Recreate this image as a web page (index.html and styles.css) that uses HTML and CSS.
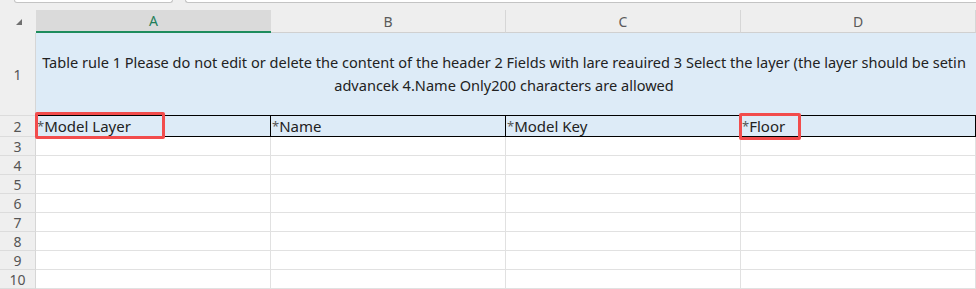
FILE: index.html
```html
<!DOCTYPE html>
<html lang="en">
<head>
    <meta charset="UTF-8">
    <meta name="viewport" content="width=device-width, initial-scale=1.0">
    <title>Model import template</title>
    <link rel="stylesheet" href="styles.css">
</head>
<body>
    <div class="tabbar">
        <span class="tab tab-first"></span>
        <span class="tab tab-rest"></span>
    </div>

    <div class="sheet">
        <div class="corner"><span class="select-all"></span></div>
        <div class="col-head is-active">A</div>
        <div class="col-head">B</div>
        <div class="col-head">C</div>
        <div class="col-head">D</div>

        <div class="row-head">1</div>
        <div class="cell rule">
            Table rule 1 Please do not edit or delete the content of the header 2 Fields with lare reauired 3 Select the layer (the layer should be setin<br>advancek 4.Name Only200 characters are allowed
        </div>

        <div class="row-head row-key">2</div>
        <div class="cell key"><span class="req">*</span>Model Layer<span class="mark mark-a"></span></div>
        <div class="cell key"><span class="req">*</span>Name</div>
        <div class="cell key"><span class="req">*</span>Model Key</div>
        <div class="cell key"><span class="req">*</span>Floor<span class="mark mark-d"></span></div>

        <div class="row-head">3</div>
        <div class="cell"></div><div class="cell"></div><div class="cell"></div><div class="cell"></div>
        <div class="row-head">4</div>
        <div class="cell"></div><div class="cell"></div><div class="cell"></div><div class="cell"></div>
        <div class="row-head">5</div>
        <div class="cell"></div><div class="cell"></div><div class="cell"></div><div class="cell"></div>
        <div class="row-head">6</div>
        <div class="cell"></div><div class="cell"></div><div class="cell"></div><div class="cell"></div>
        <div class="row-head">7</div>
        <div class="cell"></div><div class="cell"></div><div class="cell"></div><div class="cell"></div>
        <div class="row-head">8</div>
        <div class="cell"></div><div class="cell"></div><div class="cell"></div><div class="cell"></div>
        <div class="row-head">9</div>
        <div class="cell"></div><div class="cell"></div><div class="cell"></div><div class="cell"></div>
        <div class="row-head">10</div>
        <div class="cell"></div><div class="cell"></div><div class="cell"></div><div class="cell"></div>
    </div>
</body>
</html>
```

FILE: styles.css
```css
* {
    box-sizing: border-box;
}

body {
    margin: 0;
    background: #ffffff;
    font-family: "Noto Sans", sans-serif;
    overflow: hidden;
}

/* sheet tabs peeking in at the top */
.tabbar {
    height: 10px;
    background: #efefef;
    display: flex;
    align-items: flex-start;
}

.tab {
    height: 3px;
    background: #ffffff;
    border: 1px solid #c4c4c4;
    border-top: 0;
}

.tab-first {
    margin-left: 14px;
    width: 159px;
    border-radius: 0 0 4px 4px;
}

.tab-rest {
    margin-left: 12px;
    flex: 1;
    border-right: 0;
    border-radius: 0 0 0 4px;
}

.sheet {
    display: grid;
    grid-template-columns: 36px repeat(4, 235px);
    grid-template-rows: 23px 83px 21px repeat(8, 19px);
}

.corner {
    background: #efefef;
    position: relative;
}

.select-all {
    position: absolute;
    left: 16px;
    top: 9px;
    width: 0;
    height: 0;
    border-left: 6px solid transparent;
    border-bottom: 6px solid #707070;
}

.col-head {
    background: #eeeeee;
    border-right: 1px solid #d6d6d6;
    border-bottom: 1px solid #d0d0d0;
    display: flex;
    align-items: center;
    justify-content: center;
    font-size: 14px;
    color: #5a5a5a;
}

.col-head.is-active {
    background: #dadada;
    color: #1f7f5a;
    border-right: 0;
    border-bottom: 2px solid #1d8c5d;
}

.row-head {
    background: #efefef;
    border-right: 1px solid #d6d6d6;
    border-bottom: 1px solid #dcdcdc;
    display: flex;
    align-items: center;
    justify-content: center;
    font-size: 14px;
    color: #555555;
}

.row-head.row-key {
    border-right-color: #000000;
}

.cell {
    border-right: 1px solid #e1e1e1;
    border-bottom: 1px solid #e1e1e1;
    position: relative;
}

.rule {
    grid-column: 2 / 6;
    background: #ddebf7;
    border-right: 0;
    border-bottom: 1px solid #000000;
    display: flex;
    align-items: center;
    justify-content: center;
    text-align: center;
    padding-right: 4px;
    font-size: 14.55px;
    line-height: 23px;
    color: #222222;
}

.key {
    background: #ddebf7;
    border-right: 1px solid #000000;
    border-bottom: 1px solid #000000;
    display: flex;
    align-items: flex-end;
    padding-left: 1px;
    font-size: 15px;
    line-height: 20px;
    color: #222222;
}

.req {
    color: #555555;
    font-size: 13px;
}

/* red highlight around the required columns */
.mark {
    position: absolute;
    z-index: 1;
    border: 3px solid #f24c4c;
    border-radius: 2px;
}

.mark-a {
    left: -1px;
    top: -4px;
    width: 130px;
    height: 27px;
}

.mark-d {
    left: -2px;
    top: -3px;
    width: 62px;
    height: 27px;
}
```
